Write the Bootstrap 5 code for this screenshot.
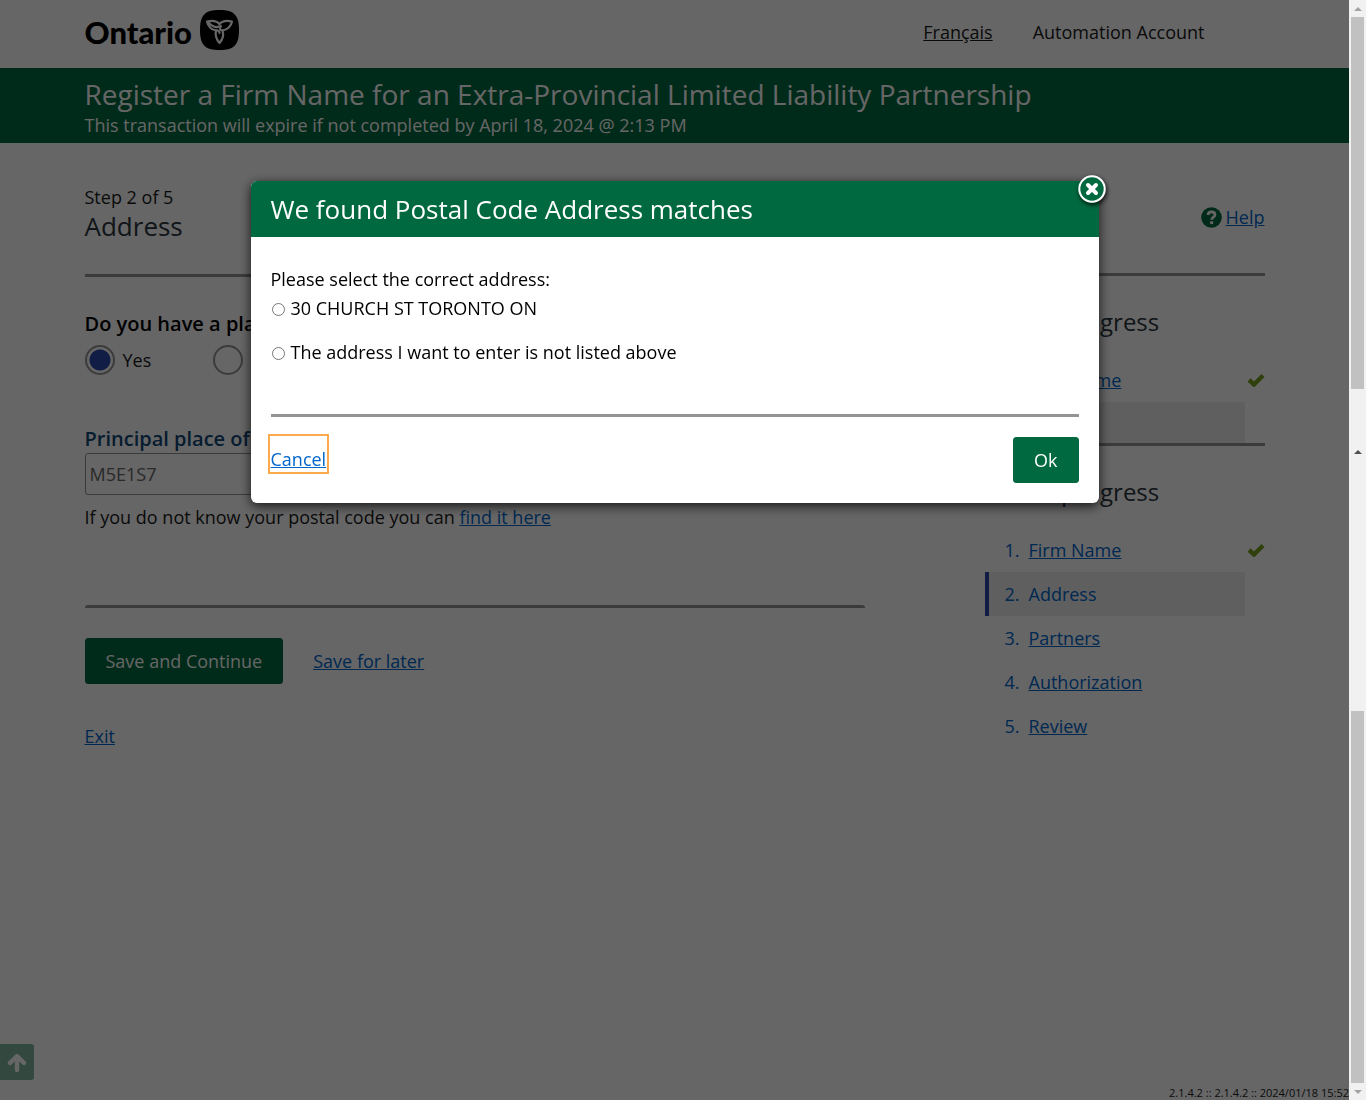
<!DOCTYPE html>
<html lang="en">
<head>
<meta charset="utf-8">
<meta name="viewport" content="width=device-width, initial-scale=1">
<title>Register a Firm Name</title>
<link href="https://cdn.jsdelivr.net/npm/bootstrap@5.3.0/dist/css/bootstrap.min.css" rel="stylesheet">
<style>
body{font-family:"Open Sans",sans-serif;font-size:18px;line-height:28px;color:#1a1a1a;background:#fff}
a{color:#06c}
a:hover{color:#00478f}
.page-wrap{max-width:1180px;margin:0 auto}
.brand{gap:8px;padding-bottom:4px}
.brand-word{font-family:Lato,sans-serif;font-weight:900;font-size:31px;line-height:36px;padding-top:3px;color:#000}
.site-head{height:68px;padding-bottom:4px}
.account-nav{gap:40px;padding-right:60px}
.account-nav a{color:#1a1a1a}
.title-bar{background:#00693f;color:#fff;height:75px;padding-top:8px}
.title-bar h1{font-size:28px;line-height:36px;font-weight:400;margin:0}
.title-bar p{font-size:18px;line-height:26px;margin:0}
.content-cols{gap:120px;padding-top:40px}
.side-col{flex:0 0 280px}
.step-head{height:91px}
.step-head h2{font-size:26px;line-height:30px;font-weight:400;color:#2b3540;margin:0}
.help-row{height:68px;margin-bottom:22px}
.rule{height:3px;background:#949494}
.form-area{height:328px;padding-top:34px}
.question{font-size:20px;font-weight:600;color:#000;line-height:26px;margin:0}
.radio-cell{width:128px}
.big-radio{width:30px;height:30px;margin:0;border:2px solid #949494;background:#fff;appearance:none;border-radius:50%}
.big-radio:checked{background:radial-gradient(circle,#2f49af 0 10px,#fff 11px)}
.field-label{font-size:20px;font-weight:600;color:#104877;margin-top:50px}
.code-input{height:42px;border:1px solid #949494;border-radius:3px;padding:0 4px;color:#666;font-size:18px;width:380px}
.btn-gov{--bs-btn-bg:#00693f;--bs-btn-color:#fff;--bs-btn-hover-bg:#00532f;--bs-btn-hover-color:#fff;--bs-btn-border-color:#00693f;--bs-btn-border-radius:3px;--bs-btn-font-size:18px;--bs-btn-font-weight:500;--bs-btn-padding-x:20px;--bs-btn-padding-y:8px;line-height:28px}
.actions{gap:30px;margin:30px 0 38px}
.progress-title{font-size:24px;line-height:32px;font-weight:400;color:#2b3540;margin:0 0 20px;padding-left:18px}
.steps{list-style:none;margin:0;padding:0}
.steps li{height:44px;display:flex;align-items:center;padding-left:20px;color:#06c}
.steps .num{width:24px}
.steps li.now{background:#eee;border-left:4px solid #2f49af;padding-left:16px;margin-right:20px}
.steps svg{margin-left:auto}
.upper-steps{height:170px;overflow:hidden;border-bottom:3px solid #949494;padding-top:30px}
.lower-steps{padding-top:30px}
.to-top{position:fixed;left:0;bottom:20px;width:34px;height:36px;background:#00693f;opacity:.5;border:0;border-radius:0 3px 3px 0;padding:0;line-height:1}
.build-tag{font-size:11px;line-height:14px;color:#1a1a1a}
.scroll-strip{width:17px;background:#f1f1f1;position:sticky;top:0;height:100vh}
.scroll-strip i{display:flex;height:17px;align-items:center;justify-content:center}
.thumb{background:#c1c1c1;width:13px;margin-left:2px;flex:372 1 0}
.track-a{flex:54 1 0}
.track-b{flex:251 1 0}
.shade{position:fixed;inset:0 17px 0 0;background:rgba(0,0,0,.6);padding:181px 20px 20px;z-index:20}
.match-box{max-width:848px;margin:0 auto;position:relative;background:#fff;border-radius:6px;box-shadow:0 3px 12px rgba(0,0,0,.8)}
.match-head{background:#00693f;color:#fff;height:56px;padding:0 20px;border-radius:6px 6px 0 0}
.match-head h2{font-size:26px;line-height:36px;font-weight:400;margin:0}
.match-body{padding:28px 20px 20px;color:#000}
.match-body input{width:13px;height:13px;margin:9px 6px 0 1px}
.match-body .form-line{height:44px;padding-top:1px}
.box-rule{margin:33px 0 20px}
.box-close{position:absolute;right:-7px;top:-6px;width:28px;height:28px;padding:0;border:0;background:none;line-height:0;border-radius:50%;box-shadow:1px 2px 4px rgba(0,0,0,.8)}
.cancel{outline:2px solid #ffa94d;padding:9px 1px 0;height:36px;margin:-1px}
</style>
<script src="https://cdn.jsdelivr.net/npm/bootstrap@5.3.0/dist/js/bootstrap.bundle.min.js"></script>
</head>
<body>
<div class="d-flex">
<div class="flex-grow-1 d-flex flex-column min-vh-100">
  <header class="site-head d-flex align-items-center">
    <div class="page-wrap w-100 d-flex align-items-center justify-content-between">
      <div class="brand d-flex align-items-center">
        <span class="brand-word">Ontario</span>
        <svg width="39" height="40" viewBox="0 0 39 40" aria-hidden="true"><path d="M19.500 0C34 0 39 5 39 20S34 40 19.500 40 0 35 0 20 5 0 19.500 0Z" fill="#000"/><g fill="none" stroke="#fff" stroke-width="2.200" stroke-linejoin="round" stroke-linecap="round"><path d="M19.500 14C22 11 26 10 32 11.500 31 16 28 19.500 22.500 20.500 20 20.500 19 18.500 21 16"/><path d="M19.500 14C17 11 13 10 7 11.500 8 16 11 19.500 16 20.500M9 13C13 17 16 18 19 16.500"/><path d="M16 20.500C15 25 16 29 19.500 33 23 29 24 25 22.500 20.500M16 20.500C18 20 19.500 21 19.500 23"/></g></svg>
      </div>
      <nav class="d-flex account-nav"><a href="#">Français</a><span>Automation Account</span></nav>
    </div>
  </header>
  <div class="title-bar"><div class="page-wrap">
    <h1>Register a Firm Name for an Extra-Provincial Limited Liability Partnership</h1>
    <p>This transaction will expire if not completed by April 18, 2024 @ 2:13 PM</p>
  </div></div>
  <main class="page-wrap w-100 d-flex content-cols flex-grow-1">
    <form class="flex-grow-1">
      <div class="step-head"><div>Step 2 of 5</div><h2>Address</h2></div>
      <div class="rule"></div>
      <div class="form-area">
        <p class="question">Do you have a place of business?</p>
        <div class="d-flex align-items-center mt-2">
          <div class="d-flex align-items-center gap-2 radio-cell"><input class="big-radio" type="radio" name="pl" id="py" checked><label for="py">Yes</label></div>
          <div class="d-flex align-items-center gap-2 radio-cell"><input class="big-radio" type="radio" name="pl" id="pn"><label for="pn">No</label></div>
        </div>
        <label class="field-label d-block" for="pc">Principal place of business</label>
        <input class="code-input d-block" id="pc" type="text" value="M5E1S7">
        <div class="mt-2">If you do not know your postal code you can <a href="#">find it here</a></div>
      </div>
      <div class="rule rounded-top"></div>
      <div class="d-flex align-items-center actions"><button type="button" class="btn btn-gov">Save and Continue</button><a href="#">Save for later</a></div>
      <a href="#">Exit</a>
    </form>
    <aside class="side-col">
      <div class="help-row d-flex justify-content-end align-items-center gap-1">
        <svg width="21" height="21" viewBox="0 0 21 21" aria-hidden="true"><circle cx="10.500" cy="10.500" r="10.300" fill="#00693f"/><path d="M7 8C7.200 5.500 9 4.800 10.500 4.800 12.500 4.800 14 6 14 7.800 14 10.300 10.700 10 10.700 12.800" fill="none" stroke="#fff" stroke-width="2.800"/><rect x="9.200" y="14.300" width="3" height="2.800" fill="#fff"/></svg>
        <a href="#">Help</a>
      </div>
      <div class="rule"></div>
      <div class="upper-steps">
        <h3 class="progress-title">Your progress</h3>
        <ol class="steps">
          <li><span class="num">1.</span><a href="#">Firm Name</a><svg width="18" height="14" viewBox="0 0 18 14"><path d="M2 7 7 11.500 16 2.500" fill="none" stroke="#77a020" stroke-width="4.400"/></svg></li>
          <li class="now"><span class="num">2.</span>Address</li>
        </ol>
      </div>
      <div class="lower-steps">
        <h3 class="progress-title">Your progress</h3>
        <ol class="steps">
          <li><span class="num">1.</span><a href="#">Firm Name</a><svg width="18" height="14" viewBox="0 0 18 14"><path d="M2 7 7 11.500 16 2.500" fill="none" stroke="#77a020" stroke-width="4.400"/></svg></li>
          <li class="now"><span class="num">2.</span>Address</li>
          <li><span class="num">3.</span><a href="#">Partners</a></li>
          <li><span class="num">4.</span><a href="#">Authorization</a></li>
          <li><span class="num">5.</span><a href="#">Review</a></li>
        </ol>
      </div>
    </aside>
  </main>
  <footer class="build-tag text-end">2.1.4.2 :: 2.1.4.2 :: 2024/01/18 15:52</footer>
</div>
<div class="scroll-strip d-flex flex-column flex-shrink-0" aria-hidden="true">
  <i><svg width="8" height="4"><path d="M0 4 4 0 8 4Z" fill="#a3a3a3"/></svg></i>
  <div class="thumb"></div>
  <div class="track-a"></div>
  <i><svg width="8" height="4"><path d="M0 4 4 0 8 4Z" fill="#505050"/></svg></i>
  <div class="track-b"></div>
  <div class="thumb"></div>
  <i><svg width="8" height="4"><path d="M0 0 4 4 8 0Z" fill="#a3a3a3"/></svg></i>
</div>
</div>
<button class="to-top" type="button" aria-label="Back to top"><svg width="20" height="20" viewBox="0 0 20 20"><path d="M10 17V4M3 10 10 3 17 10" fill="none" stroke="#fff" stroke-width="4.400" stroke-linecap="round" stroke-linejoin="round"/></svg></button>
<div class="shade">
  <div class="match-box" role="dialog" aria-labelledby="mt">
    <div class="match-head d-flex align-items-center"><h2 id="mt">We found Postal Code Address matches</h2></div>
    <button class="box-close" type="button" aria-label="Close"><svg width="28" height="28" viewBox="0 0 28 28"><circle cx="14" cy="14" r="12.700" fill="#00693f" stroke="#fff" stroke-width="2"/><path d="M10 10 18 18M18 10 10 18" stroke="#fff" stroke-width="4" stroke-linecap="round"/></svg></button>
    <div class="match-body">
      <div>Please select the correct address:</div>
      <div class="form-line d-flex align-items-start"><input type="radio" name="ad" id="a1"><label for="a1">30 CHURCH ST TORONTO ON</label></div>
      <div class="form-line d-flex align-items-start"><input type="radio" name="ad" id="a2"><label for="a2">The address I want to enter is not listed above</label></div>
      <div class="rule box-rule"></div>
      <div class="d-flex justify-content-between align-items-start"><a class="cancel" href="#">Cancel</a><button class="btn btn-gov" type="button">Ok</button></div>
    </div>
  </div>
</div>
</body>
</html>
